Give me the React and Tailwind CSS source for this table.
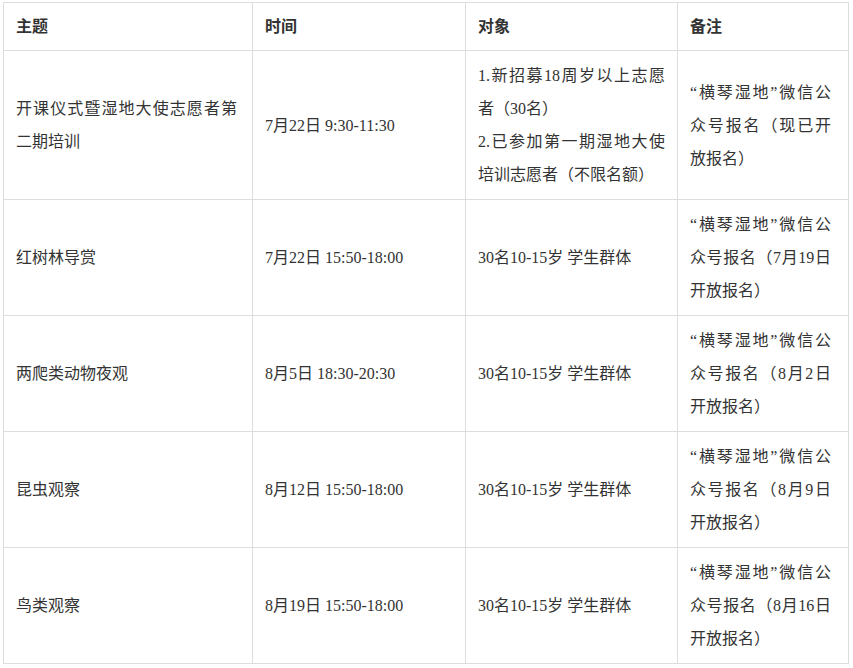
import React from "react"

const rows = [
  {
    topic: "开课仪式暨湿地大使志愿者第二期培训",
    time: "7月22日 9:30-11:30",
    target: ["1.新招募18周岁以上志愿者（30名）", "2.已参加第一期湿地大使培训志愿者（不限名额）"],
    note: "（现已开放报名）",
  },
  { topic: "红树林导赏", time: "7月22日 15:50-18:00", target: ["30名10-15岁 学生群体"], note: "（7月19日开放报名）" },
  { topic: "两爬类动物夜观", time: "8月5日 18:30-20:30", target: ["30名10-15岁 学生群体"], note: "（8月2日开放报名）" },
  { topic: "昆虫观察", time: "8月12日 15:50-18:00", target: ["30名10-15岁 学生群体"], note: "（8月9日开放报名）" },
  { topic: "鸟类观察", time: "8月19日 15:50-18:00", target: ["30名10-15岁 学生群体"], note: "（8月16日开放报名）" },
]

const cell = "border border-[#dddddd] py-2 align-middle text-justify"
const head = "border border-[#dddddd] pl-3 py-[7px] align-middle text-left font-bold"

const App = () => {
  return (
    <div
      className="bg-white min-h-screen pt-[2px] pl-[3px] text-[16px] leading-[33px] text-[#333333]"
      style={{ fontFamily: '"Liberation Serif", "Noto Sans CJK SC", serif' }}
    >
      <table className="table-fixed border-collapse w-[845px]">
        <colgroup>
          <col className="w-[249px]" />
          <col className="w-[213px]" />
          <col className="w-[212px]" />
          <col className="w-[171px]" />
        </colgroup>
        <thead>
          <tr>
            <th className={head}>主题</th>
            <th className={head}>时间</th>
            <th className={head}>对象</th>
            <th className={head}>备注</th>
          </tr>
        </thead>
        <tbody>
          {rows.map((r) => (
            <tr key={r.topic}>
              <td className={cell + " pl-3 pr-[15px]"}>{r.topic}</td>
              <td className={cell + " px-3"}>{r.time}</td>
              <td className={cell + " px-3"}>
                {r.target.map((t) => (
                  <p key={t}>{t}</p>
                ))}
              </td>
              <td className={cell + " pl-3 pr-[17px]"}>
                “横琴湿地”微信公众号报名{r.note}
              </td>
            </tr>
          ))}
        </tbody>
      </table>
    </div>
  )
}

export default App
